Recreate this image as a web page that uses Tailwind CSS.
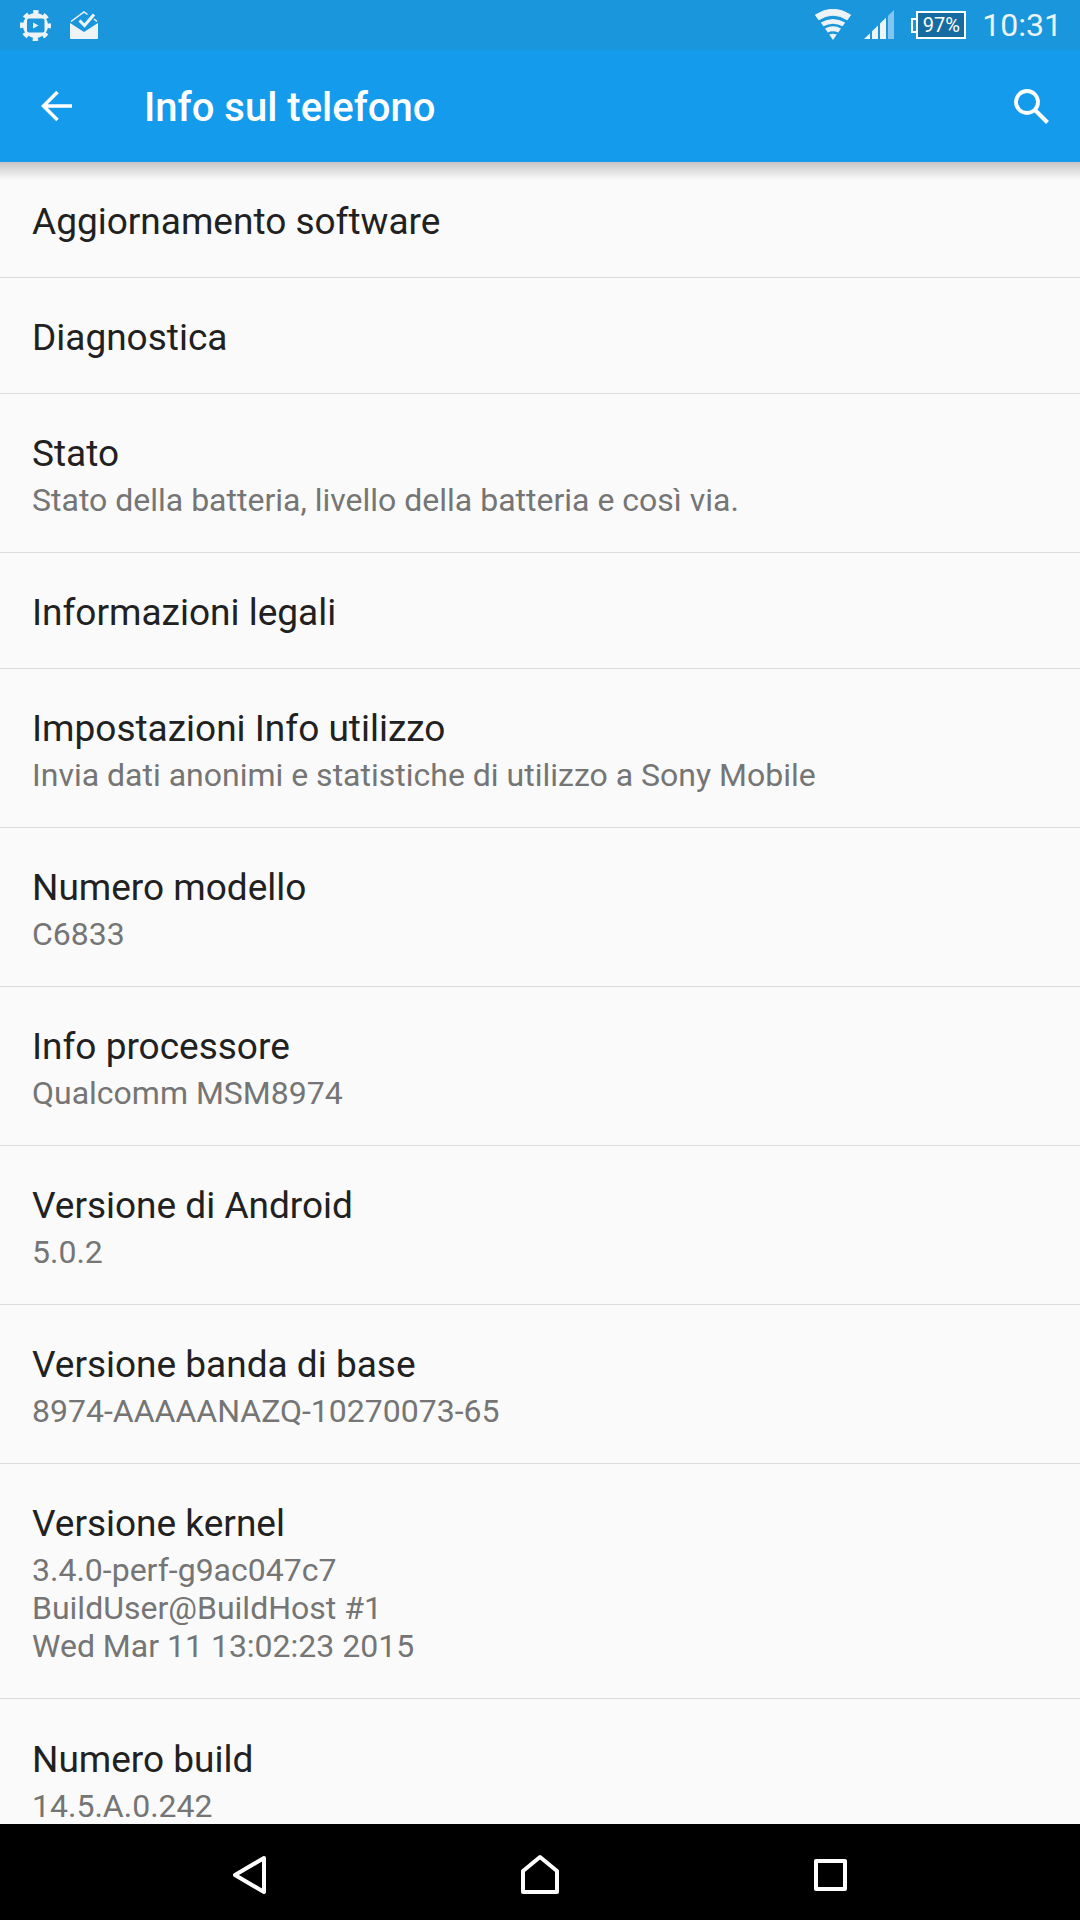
<!DOCTYPE html>
<html lang="it">
<head>
    <meta charset="UTF-8">
    <meta name="viewport" content="width=device-width, initial-scale=1.0">
    <title>Info sul telefono</title>
    <script src="https://cdn.jsdelivr.net/npm/@tailwindcss/browser@4"></script>
</head>
<body class="bg-[#fafafa] font-['Roboto',sans-serif]">
    <div class="w-[1080px] h-[1920px] flex flex-col overflow-hidden relative">
        <!-- status bar -->
        <div class="h-[50px] shrink-0 bg-[#1a96dc] flex items-center text-[#eef3f6] pl-[20px] pr-[18px]">
            <svg class="w-[31px] h-[31px]" viewBox="0 0 31 31">
                <circle cx="15.500" cy="15.500" r="12.500" fill="#eef3f6"/>
                <circle cx="15.500" cy="15.500" r="13.500" fill="none" stroke="#eef3f6" stroke-width="4" stroke-dasharray="5.300 5.300" stroke-dashoffset="2.650"/>
                <rect x="7" y="8.500" width="17.500" height="14" rx="2" fill="#1a96dc"/>
                <path fill="#eef3f6" d="M13 12.500l5.500 3-5.500 3z"/>
            </svg>
            <svg class="w-[28px] h-[28px] ml-[19px]" viewBox="0 0 28 28">
                <path fill="#eef3f6" d="M0 12l14 9 14-9v15a1 1 0 0 1-1 1H1a1 1 0 0 1-1-1z"/>
                <path fill="none" stroke="#eef3f6" stroke-width="1.500" d="M1 10.500L14 1l3.500 2.500M24 8l3 2.500"/>
                <path fill="none" stroke="#eef3f6" stroke-width="3" d="M9.500 9.500l5 5L24 3.500"/>
            </svg>
            <div class="flex-1"></div>
            <svg class="w-[38px] h-[32px]" viewBox="0 0 38 32">
                <path fill="#eef3f6" stroke="#eef3f6" stroke-linejoin="round" d="M1.400 5.900Q19-5.500 36.600 5.900L33.200 10.800Q19 1.500 4.800 10.800z"/>
                <path fill="#eef3f6" d="M6.800 13.600Q19 6.500 31.200 13.600L28.600 17.300Q19 12 9.400 17.300z"/>
                <path fill="#eef3f6" d="M11 19.500Q19 15 27 19.500L24.200 23.600Q19 21 13.800 23.600z"/>
                <path fill="#eef3f6" d="M15.200 25.500Q19 24 22.800 25.500L19 31z"/>
            </svg>
            <svg class="w-[30px] h-[30px] ml-[12px]" viewBox="0 0 30 30">
                <path fill="#eef3f6" d="M0 29l6-5.800V29zM8 29V21.300l6-5.800V29zM16 29V13.500l6-5.800V29z"/>
                <path fill="#84c5ef" d="M24 29V5.800L30 0v29z"/>
            </svg>
            <div class="ml-[17px] flex items-center">
                <div class="w-[5px] h-[15px] border-2 border-r-0 border-white"></div>
                <div class="w-[50px] h-[28px] bg-[#166ca0] border-2 border-white flex items-center justify-center text-white text-[20px] leading-none">97%</div>
            </div>
            <span class="ml-[16px] text-[32px] leading-none">10:31</span>
        </div>

        <!-- app bar -->
        <div class="h-[112px] shrink-0 bg-[#159bec] flex items-center text-white relative z-10">
            <svg class="w-[31px] h-[30px] ml-[41px]" viewBox="0 0 31 30"><path fill="none" stroke="#fff" stroke-width="3.500" d="M31 15H3M16.500 1L2.500 15l14 14"/></svg>
            <h1 class="ml-[72px] mt-[3px] text-[40px] font-medium leading-none">Info sul telefono</h1>
            <div class="flex-1"></div>
            <svg class="w-[35px] h-[35px] mr-[31px]" viewBox="0 0 35 35"><circle cx="13" cy="13" r="11" fill="none" stroke="#fff" stroke-width="3.800"/><path stroke="#fff" stroke-width="4" d="M21 21l12.500 12.500"/></svg>
            <!-- shadow under the app bar -->
            <div class="absolute left-0 right-0 top-full h-[18px] bg-gradient-to-b from-[#c6c6c6] to-[#fafafa]/0"></div>
        </div>

        <!-- list -->
        <div class="flex-1 overflow-hidden">
            <div class="h-[116px] px-[32px] pt-[4px] flex items-center border-b border-[#dcdcdc] text-[37px] text-[#212121]">Aggiornamento software</div>
            <div class="h-[116px] px-[32px] pt-[4px] flex items-center border-b border-[#dcdcdc] text-[37px] text-[#212121]">Diagnostica</div>
            <div class="h-[159px] px-[32px] flex flex-col justify-center border-b border-[#dcdcdc]">
                <div class="text-[37px] leading-[54px] text-[#212121]">Stato</div>
                <div class="text-[32px] leading-[38px] text-[#757575]">Stato della batteria, livello della batteria e così via.</div>
            </div>
            <div class="h-[116px] px-[32px] pt-[4px] flex items-center border-b border-[#dcdcdc] text-[37px] text-[#212121]">Informazioni legali</div>
            <div class="h-[159px] px-[32px] flex flex-col justify-center border-b border-[#dcdcdc]">
                <div class="text-[37px] leading-[54px] text-[#212121]">Impostazioni Info utilizzo</div>
                <div class="text-[32px] leading-[38px] text-[#757575]">Invia dati anonimi e statistiche di utilizzo a Sony Mobile</div>
            </div>
            <div class="h-[159px] px-[32px] flex flex-col justify-center border-b border-[#dcdcdc]">
                <div class="text-[37px] leading-[54px] text-[#212121]">Numero modello</div>
                <div class="text-[32px] leading-[38px] text-[#757575]">C6833</div>
            </div>
            <div class="h-[159px] px-[32px] flex flex-col justify-center border-b border-[#dcdcdc]">
                <div class="text-[37px] leading-[54px] text-[#212121]">Info processore</div>
                <div class="text-[32px] leading-[38px] text-[#757575]">Qualcomm MSM8974</div>
            </div>
            <div class="h-[159px] px-[32px] flex flex-col justify-center border-b border-[#dcdcdc]">
                <div class="text-[37px] leading-[54px] text-[#212121]">Versione di Android</div>
                <div class="text-[32px] leading-[38px] text-[#757575]">5.0.2</div>
            </div>
            <div class="h-[159px] px-[32px] flex flex-col justify-center border-b border-[#dcdcdc]">
                <div class="text-[37px] leading-[54px] text-[#212121]">Versione banda di base</div>
                <div class="text-[32px] leading-[38px] text-[#757575]">8974-AAAAANAZQ-10270073-65</div>
            </div>
            <div class="h-[235px] px-[32px] flex flex-col justify-center border-b border-[#dcdcdc]">
                <div class="text-[37px] leading-[54px] text-[#212121]">Versione kernel</div>
                <div class="text-[32px] leading-[38px] text-[#757575]">3.4.0-perf-g9ac047c7<br>BuildUser@BuildHost #1<br>Wed Mar 11 13:02:23 2015</div>
            </div>
            <div class="h-[159px] px-[32px] flex flex-col justify-center">
                <div class="text-[37px] leading-[54px] text-[#212121]">Numero build</div>
                <div class="text-[32px] leading-[38px] text-[#757575]">14.5.A.0.242</div>
            </div>
        </div>

        <!-- nav bar -->
        <div class="h-[96px] shrink-0 bg-black relative z-10">
            <svg class="w-[1080px] h-[96px]" viewBox="0 0 1080 96" fill="none" stroke="#fff" stroke-width="4" stroke-linejoin="round">
                <path d="M264 34L235 51l29 17z"/>
                <path d="M523 68V47L540 33l17 14v21z"/>
                <rect x="816" y="37" width="29" height="28"/>
            </svg>
        </div>
    </div>
</body>
</html>
